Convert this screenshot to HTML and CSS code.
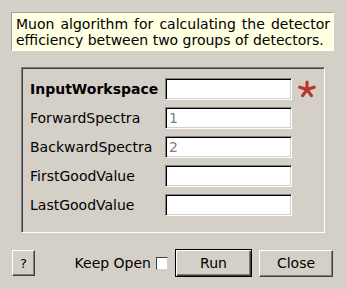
FILE: index.html
```html
<!DOCTYPE html>
<html lang="en">
<head>
  <meta charset="utf-8">
  <title>MuonGroupDetectorEfficiency</title>
  <link rel="stylesheet" href="styles.css">
</head>
<body>
  <div class="dialog">
    <div class="description">Muon algorithm for calculating the detector efficiency between two groups of detectors.</div>

    <div class="group">
      <div class="row">
        <span class="label bold">InputWorkspace</span>
        <input class="field" type="text" value="">
        <svg class="required" width="18" height="18" viewBox="0 0 18 18">
          <g stroke="#b3372b" stroke-width="3.2" stroke-linecap="round">
            <line x1="9" y1="9.5" x2="9" y2="2"/>
            <line x1="9" y1="9.5" x2="16.2" y2="7.2"/>
            <line x1="9" y1="9.5" x2="13.4" y2="15.6"/>
            <line x1="9" y1="9.5" x2="4.6" y2="15.6"/>
            <line x1="9" y1="9.5" x2="1.8" y2="7.2"/>
          </g>
        </svg>
      </div>
      <div class="row">
        <span class="label">ForwardSpectra</span>
        <input class="field" type="text" placeholder="1">
      </div>
      <div class="row">
        <span class="label">BackwardSpectra</span>
        <input class="field" type="text" placeholder="2">
      </div>
      <div class="row">
        <span class="label">FirstGoodValue</span>
        <input class="field" type="text" value="">
      </div>
      <div class="row">
        <span class="label">LastGoodValue</span>
        <input class="field" type="text" value="">
      </div>
    </div>

    <div class="buttons">
      <button class="btn help">?</button>
      <label class="keep">Keep Open <span class="check"></span></label>
      <button class="btn run">Run</button>
      <button class="btn close">Close</button>
    </div>
  </div>
</body>
</html>
```

FILE: styles.css
```css
html, body {
    margin: 0;
    padding: 0;
    height: 100%;
}

body {
    background: #d4d0c8;
    color: #000;
    font-family: "DejaVu Sans", sans-serif;
    font-size: 14px;
}

.dialog {
    display: flex;
    flex-direction: column;
    width: 333px;
    padding: 12px 0 0 11px;
    box-sizing: border-box;
}

.description {
    width: 323px;
    height: 39px;
    flex-shrink: 0;
    box-sizing: border-box;
    padding: 3px 3px 0 4px;
    background: #ffffe1;
    border-top: 1px solid #a0a0a0;
    border-left: 1px solid #a0a0a0;
    border-right: 1px solid #fff;
    border-bottom: 1px solid #fff;
    line-height: 16px;
    text-align: justify;
}

.group {
    margin: 16px 0 0 10px;
    width: 304px;
    height: 166px;
    box-sizing: border-box;
    border-top: 1px solid #808080;
    border-left: 1px solid #808080;
    border-right: 1px solid #fff;
    border-bottom: 1px solid #fff;
    box-shadow: inset 1px 1px #404040, inset -1px -1px #d4d0c8;
    padding: 10px 0 0 8px;
    display: flex;
    flex-direction: column;
    gap: 7px;
}

.row {
    display: flex;
    align-items: center;
    height: 22px;
}

.label {
    width: 135px;
    color: #000;
}

.bold {
    font-weight: bold;
}

.field {
    width: 127px;
    height: 22px;
    box-sizing: border-box;
    margin: 0;
    padding: 0 3px;
    background: #fff;
    font: 14px "DejaVu Sans", sans-serif;
    border-top: 1px solid #808080;
    border-left: 1px solid #808080;
    border-right: 1px solid #fff;
    border-bottom: 1px solid #fff;
    box-shadow: inset 1px 1px #000, inset -1px -1px #d4d0c8;
    outline: none;
}

.field::placeholder {
    color: #808080;
}

.required {
    margin-left: 6px;
}

.buttons {
    display: flex;
    align-items: center;
    margin-top: 16px;
    padding-left: 1px;
}

.btn {
    height: 27px;
    box-sizing: border-box;
    background: #d4d0c8;
    font: 14px "DejaVu Sans", sans-serif;
    color: #000;
    padding: 0;
    border-top: 1px solid #fff;
    border-left: 1px solid #fff;
    border-right: 1px solid #404040;
    border-bottom: 1px solid #404040;
    box-shadow: inset -1px -1px #808080;
}

.help {
    width: 23px;
    height: 26px;
    font-size: 13px;
}

.keep {
    display: flex;
    align-items: center;
    margin-left: auto;
}

.check {
    display: inline-block;
    width: 12px;
    height: 13px;
    box-sizing: border-box;
    margin-left: 5px;
    background: #fff;
    border-top: 1px solid #404040;
    border-left: 1px solid #404040;
    border-right: 1px solid #d4d0c8;
    border-bottom: 1px solid #d4d0c8;
}

.run {
    width: 77px;
    height: 28px;
    margin-left: 7px;
    border: 1px solid #000;
    box-shadow: inset 1px 1px #fff, inset -1px -1px #404040, inset -2px -2px #808080;
}

.close {
    width: 74px;
    margin-left: 7px;
}
```
